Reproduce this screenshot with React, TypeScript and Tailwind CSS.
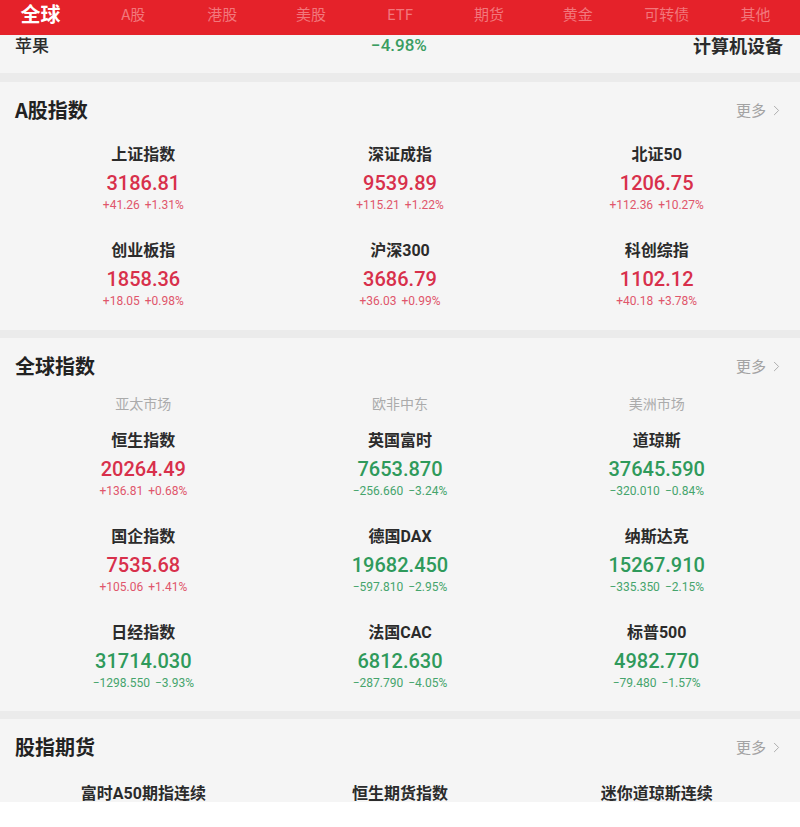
import React from "react";
import { ChevronRight } from "lucide-react";

type Item = { name: string; value: string; d: string; p: string; up: boolean };

const tabs = ["全球", "A股", "港股", "美股", "ETF", "期货", "黄金", "可转债", "其他"];

const aShares: Item[] = [
  { name: "上证指数", value: "3186.81", d: "+41.26", p: "+1.31%", up: true },
  { name: "深证成指", value: "9539.89", d: "+115.21", p: "+1.22%", up: true },
  { name: "北证50", value: "1206.75", d: "+112.36", p: "+10.27%", up: true },
  { name: "创业板指", value: "1858.36", d: "+18.05", p: "+0.98%", up: true },
  { name: "沪深300", value: "3686.79", d: "+36.03", p: "+0.99%", up: true },
  { name: "科创综指", value: "1102.12", d: "+40.18", p: "+3.78%", up: true },
];

const globalIdx: Item[] = [
  { name: "恒生指数", value: "20264.49", d: "+136.81", p: "+0.68%", up: true },
  { name: "英国富时", value: "7653.870", d: "−256.660", p: "−3.24%", up: false },
  { name: "道琼斯", value: "37645.590", d: "−320.010", p: "−0.84%", up: false },
  { name: "国企指数", value: "7535.68", d: "+105.06", p: "+1.41%", up: true },
  { name: "德国DAX", value: "19682.450", d: "−597.810", p: "−2.95%", up: false },
  { name: "纳斯达克", value: "15267.910", d: "−335.350", p: "−2.15%", up: false },
  { name: "日经指数", value: "31714.030", d: "−1298.550", p: "−3.93%", up: false },
  { name: "法国CAC", value: "6812.630", d: "−287.790", p: "−4.05%", up: false },
  { name: "标普500", value: "4982.770", d: "−79.480", p: "−1.57%", up: false },
];

const futures = ["富时A50期指连续", "恒生期货指数", "迷你道琼斯连续"];

const cjk = "font-['Noto_Sans_CJK_SC',sans-serif]";
const num = "font-['Roboto','Noto_Sans_CJK_SC',sans-serif]";

function Cell({ item }: { item: Item }) {
  return (
    <div className="flex flex-col items-center">
      <div className={`h-[22px] text-[16px] leading-[22px] font-bold text-[#2b2b2b] ${num}`}>{item.name}</div>
      <div
        className={`mt-[3px] h-[28px] text-[20px] leading-[28px] font-medium ${num} ${
          item.up ? "text-[#d8304b]" : "text-[#2f9a5b]"
        }`}
      >
        {item.value}
      </div>
      <div
        className={`flex h-[16px] gap-[5px] text-[12px] leading-[16px] ${num} ${
          item.up ? "text-[#e0566b]" : "text-[#45a46c]"
        }`}
      >
        <span>{item.d}</span>
        <span>{item.p}</span>
      </div>
    </div>
  );
}

function Header({ title }: { title: string }) {
  return (
    <div className="flex h-[24px] items-center justify-between">
      <div className={`text-[20px] leading-[24px] font-bold text-[#222] ${cjk}`}>{title}</div>
      <div className={`flex items-center gap-[2px] text-[15px] text-[#a3a3a3] ${cjk}`}>
        <span>更多</span>
        <ChevronRight size={17} strokeWidth={1.4} className="text-[#acacac]" />
      </div>
    </div>
  );
}

export default function App() {
  return (
    <div className="h-[827px] w-[800px] overflow-hidden bg-white">
      <div className="flex h-[802px] flex-col overflow-hidden bg-[#ebebeb]">
        {/* Top tabs */}
        <div className="grid h-[35px] shrink-0 grid-cols-9 items-start bg-[#e5222a] pt-[3px]">
          {tabs.map((t, i) => (
            <div
              key={t}
              className={`text-center leading-[22px] ${cjk} ${
                i === 0
                  ? "pr-[8px] text-[20px] font-bold text-white"
                  : "text-[15px] text-[#f2777c]"
              }`}
            >
              {t}
            </div>
          ))}
        </div>

        {/* Partial row */}
        <div className="flex h-[38px] shrink-0 items-start justify-between bg-[#f5f5f5] pl-[15px] pr-[17px]">
          <div className={`w-[200px] text-[17px] leading-[20px] font-medium text-[#2b2b2b] ${cjk}`}>苹果</div>
          <div className={`text-[17px] leading-[20px] font-medium text-[#3a9d62] ${num}`}>−4.98%</div>
          <div className={`w-[200px] text-right text-[18px] leading-[20px] font-bold text-[#2b2b2b] ${cjk}`}>
            计算机设备
          </div>
        </div>

        {/* A股指数 */}
        <div className="mt-[9px] shrink-0 bg-[#f5f5f5] px-[15px] pt-[16px] pb-[21px]">
          <Header title="A股指数" />
          <div className="mt-[22px] grid grid-cols-3 gap-y-[27px]">
            {aShares.map((it) => (
              <Cell key={it.name} item={it} />
            ))}
          </div>
        </div>

        {/* 全球指数 */}
        <div className="mt-[8px] shrink-0 bg-[#f5f5f5] px-[15px] pt-[16px] pb-[20px]">
          <Header title="全球指数" />
          <div className={`mt-[15px] grid grid-cols-3 text-center text-[14px] leading-[20px] text-[#ababab] ${cjk}`}>
            <div>亚太市场</div>
            <div>欧非中东</div>
            <div>美洲市场</div>
          </div>
          <div className="mt-[17px] grid grid-cols-3 gap-y-[27px]">
            {globalIdx.map((it) => (
              <Cell key={it.name} item={it} />
            ))}
          </div>
        </div>

        {/* 股指期货 */}
        <div className="mt-[8px] h-[83px] shrink-0 overflow-hidden bg-[#f5f5f5] px-[15px] pt-[16px]">
          <Header title="股指期货" />
          <div className="mt-[24px] grid grid-cols-3">
            {futures.map((f) => (
              <div key={f} className={`text-center text-[16px] leading-[22px] font-bold text-[#2b2b2b] ${num}`}>
                {f}
              </div>
            ))}
          </div>
        </div>
      </div>
    </div>
  );
}
